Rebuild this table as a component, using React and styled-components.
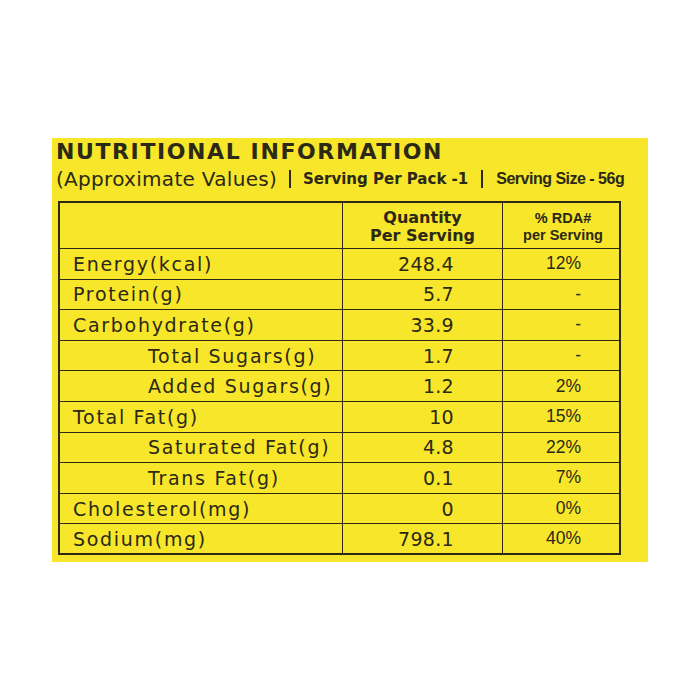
import React from 'react';
import styled, {createGlobalStyle} from 'styled-components';

const GlobalStyle = createGlobalStyle`
    html, body {
        margin: 0;
        padding: 0;
        background: #ffffff;
    }
`;

const Page = styled.div`
    width: 700px;
    height: 700px;
    padding-top: 138px;
    box-sizing: border-box;
`;

const Panel = styled.div`
    margin-left: 52px;
    width: 596px;
    height: 424px;
    box-sizing: border-box;
    padding: 0 0 0 4px;
    background: #f7e62a;
    color: #2b2916;
    font-family: "DejaVu Sans", sans-serif;
`;

const Title = styled.h1`
    margin: 0;
    font-size: 22px;
    line-height: 27px;
    font-weight: 700;
    letter-spacing: 1.6px;
`;

const SubLine = styled.div`
    display: flex;
    align-items: center;
    height: 28px;
`;

const Approx = styled.span`
    font-size: 20px;
    letter-spacing: 0.3px;
`;

const Divider = styled.span`
    display: inline-block;
    width: 2px;
    height: 18px;
    background: #2b2916;
    margin: 0 ${p => p.gap}px;
`;

const ServingText = styled.span`
    font-weight: 700;
    font-size: ${p => p.narrow ? 16 : 15}px;
    font-family: ${p => p.narrow ? '"Liberation Sans", sans-serif' : '"DejaVu Sans", sans-serif'};
    letter-spacing: ${p => p.narrow ? '-0.5px' : '0'};
`;

const Table = styled.table`
    margin: 8px 0 0 2px;
    table-layout: fixed;
    border-collapse: collapse;
    border: 2px solid #2b2916;
`;

const HeadCell = styled.th`
    width: ${p => p.w}px;
    height: 43px;
    padding: 0;
    border: 1.5px solid #2b2916;
    text-align: center;
    vertical-align: middle;
    font-weight: 700;
    font-size: ${p => p.small ? 14.5 : 16}px;
    line-height: ${p => p.small ? 17 : 18}px;
    font-family: ${p => p.small ? '"Liberation Sans", sans-serif' : '"DejaVu Sans", sans-serif'};
    padding-left: ${p => p.small ? 4 : 0}px;
    padding-top: 2px;
    white-space: nowrap;
`;

const Row = styled.tr`
    height: 30.6px;
`;

const Label = styled.td`
    padding: 0 0 0 ${p => p.indent ? 88 : 13}px;
    border: 1.5px solid #2b2916;
    font-size: 19px;
    letter-spacing: 1.7px;
    white-space: nowrap;
`;

const Qty = styled.td`
    padding: 0 48px 0 0;
    border: 1.5px solid #2b2916;
    text-align: right;
    font-size: 19px;
    letter-spacing: 0.3px;
`;

const Rda = styled.td`
    padding: 0 38px 0 0;
    border: 1.5px solid #2b2916;
    text-align: right;
    font-family: "Liberation Sans", sans-serif;
    font-size: 17.5px;
`;

const nutrients = [
    {name: 'Energy(kcal)', qty: '248.4', rda: '12%'},
    {name: 'Protein(g)', qty: '5.7', rda: '-'},
    {name: 'Carbohydrate(g)', qty: '33.9', rda: '-'},
    {name: 'Total Sugars(g)', qty: '1.7', rda: '-', indent: true},
    {name: 'Added Sugars(g)', qty: '1.2', rda: '2%', indent: true},
    {name: 'Total Fat(g)', qty: '10', rda: '15%'},
    {name: 'Saturated Fat(g)', qty: '4.8', rda: '22%', indent: true},
    {name: 'Trans Fat(g)', qty: '0.1', rda: '7%', indent: true},
    {name: 'Cholesterol(mg)', qty: '0', rda: '0%'},
    {name: 'Sodium(mg)', qty: '798.1', rda: '40%'}
];

const App = () => (
    <Page>
        <GlobalStyle />
        <Panel>
            <Title>NUTRITIONAL INFORMATION</Title>
            <SubLine>
                <Approx>(Approximate Values)</Approx>
                <Divider gap={12} />
                <ServingText>Serving Per Pack -1</ServingText>
                <Divider gap={13} />
                <ServingText narrow>Serving Size - 56g</ServingText>
            </SubLine>
            <Table>
                <thead>
                    <tr>
                        <HeadCell w={282}></HeadCell>
                        <HeadCell w={159}>Quantity<br />Per Serving</HeadCell>
                        <HeadCell w={112} small>% RDA#<br />per Serving</HeadCell>
                    </tr>
                </thead>
                <tbody>
                    {nutrients.map(n => (
                        <Row key={n.name}>
                            <Label indent={n.indent}>{n.name}</Label>
                            <Qty>{n.qty}</Qty>
                            <Rda>{n.rda}</Rda>
                        </Row>
                    ))}
                </tbody>
            </Table>
        </Panel>
    </Page>
);

export default App;
